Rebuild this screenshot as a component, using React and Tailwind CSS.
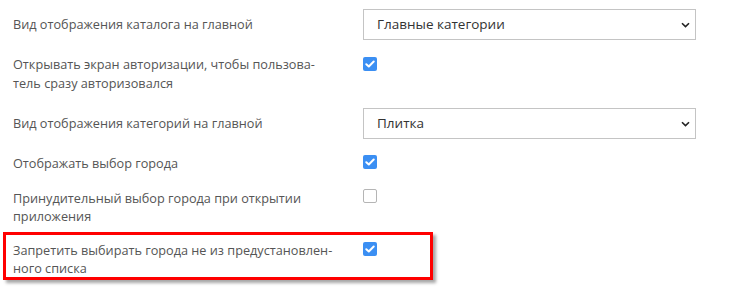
const font = { fontFamily: '"Open Sans", "Noto Sans", sans-serif' };

function Check({ checked }) {
  if (!checked) {
    return <span className="block w-[14px] h-[14px] rounded-[2px] border border-[#b5b5b5] bg-white" />;
  }
  return (
    <span className="flex items-center justify-center w-[14px] h-[14px] rounded-[2px] bg-[#3b8ff3]">
      <svg width="10" height="8" viewBox="0 0 10 8" fill="none">
        <path d="M1.3 4.2 3.8 6.5 8.7 1.5" stroke="#fff" strokeWidth="2" strokeLinecap="round" strokeLinejoin="round" />
      </svg>
    </span>
  );
}

function Select({ value }) {
  return (
    <div className="flex items-center justify-between w-[333px] h-[31px] border border-[#c4c4c4] bg-white pl-[13px] pr-[5px]">
      <span className="text-[13.5px] text-[#333]">{value}</span>
      <svg width="9" height="6" viewBox="0 0 9 6" fill="none">
        <path d="M1 1.2 4.5 4.6 8 1.2" stroke="#222" strokeWidth="1.6" />
      </svg>
    </div>
  );
}

function Label({ lines }) {
  return (
    <div className="w-[350px] text-[12.7px] leading-[18.5px] text-[#555]">
      {lines.map((l, i) => <div key={i}>{l}</div>)}
    </div>
  );
}

export default function App() {
  return (
    <div className="w-[740px] h-[287px] bg-white overflow-hidden pl-[13px]" style={font}>
      {/* catalog view */}
      <div className="flex items-center mt-[9px]">
        <Label lines={['Вид отображения каталога на главной']} />
        <Select value="Главные категории" />
      </div>

      <div className="flex items-start mt-[15px]">
        <Label lines={['Открывать экран авторизации, чтобы пользова-', 'тель сразу авторизовался']} />
        <div className="mt-[2px]"><Check checked /></div>
      </div>

      <div className="flex items-center mt-[16px]">
        <Label lines={['Вид отображения категорий на главной']} />
        <Select value="Плитка" />
      </div>

      <div className="flex items-start mt-[15px]">
        <Label lines={['Отображать выбор города']} />
        <div className="mt-[1px]"><Check checked /></div>
      </div>

      <div className="flex items-start mt-[16px]">
        <Label lines={['Принудительный выбор города при открытии', 'приложения']} />
        <div><Check /></div>
      </div>

      {/* highlighted row */}
      <div className="relative flex items-start mt-[15px]">
        <Label lines={['Запретить выбирать города не из предустановлен-', 'ного списка']} />
        <div className="mt-[1px]"><Check checked /></div>
        <div className="absolute left-[-10px] top-[-9px] w-[430px] h-[48px] border-[3px] border-[#f00] shadow-[3px_3px_3px_rgba(0,0,0,0.35)] pointer-events-none" />
      </div>
    </div>
  );
}
